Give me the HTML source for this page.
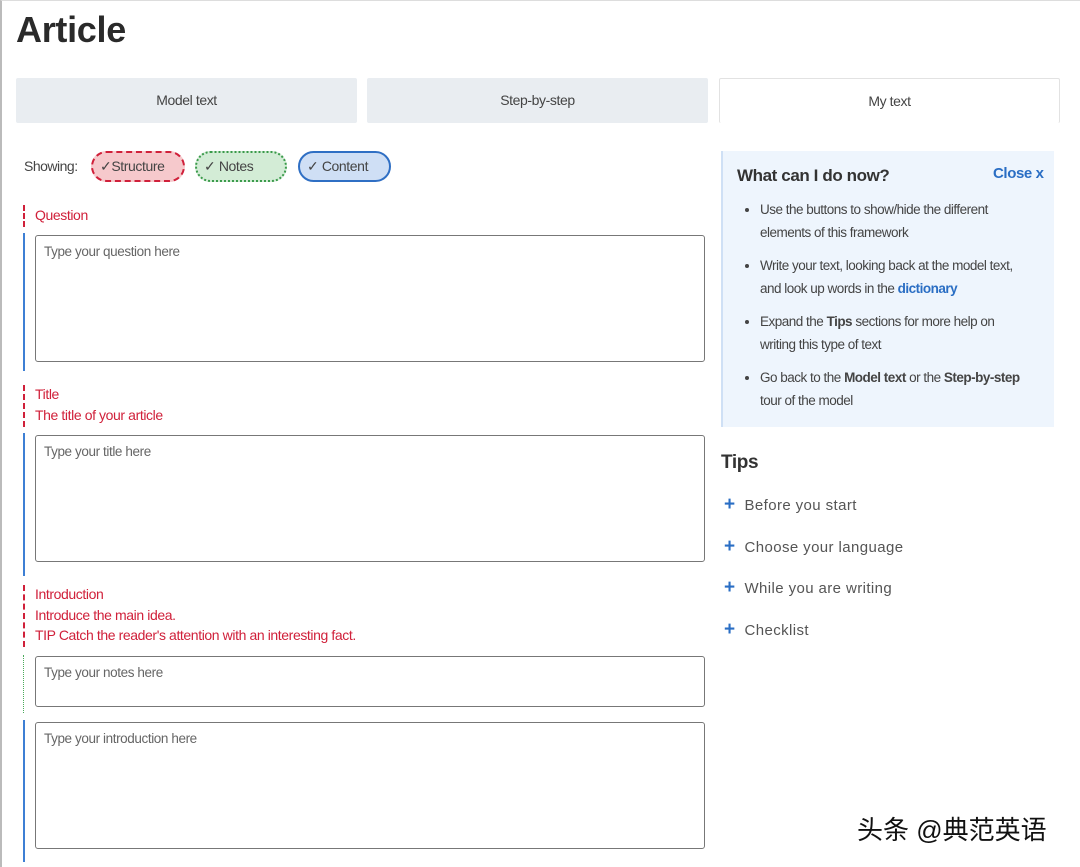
<!DOCTYPE html>
<html><head><meta charset="utf-8"><style>
*{margin:0;padding:0;box-sizing:border-box}
body{width:1080px;height:867px;background:#fff;font-family:"Liberation Sans",sans-serif;position:relative;overflow:hidden;color:#333}
.a{position:absolute}
.frame{left:0;top:0;width:1080px;height:867px;border-left:2px solid #bbb;border-top:1px solid #ddd}
h1{position:absolute;left:16px;top:9px;font-size:36px;font-weight:bold;color:#2a2a2a;letter-spacing:-0.3px}
.tab{position:absolute;top:78px;height:45px;width:341px;background:#e9edf1;font-size:14px;color:#444;text-align:center;line-height:45px;letter-spacing:-0.4px;border-radius:2px}
.pill{position:absolute;top:151px;height:31px;border-radius:16px;font-size:14px;line-height:27px;color:#444;letter-spacing:-0.4px;padding-left:7px}
.lbl{position:absolute;left:35px;font-size:14px;color:#d0203a;letter-spacing:-0.4px;line-height:21px}
.box{position:absolute;left:35px;width:670px;border:1.5px solid #777;border-radius:3px;font-size:13.5px;color:#666;padding:8px 8px;letter-spacing:-0.4px}
.rd{position:absolute;left:23px;width:0;border-left:2px dashed #d0203a}
.bl{position:absolute;left:23px;width:2px;background:#3d7fd4}
.gd{position:absolute;left:23px;width:0;border-left:1.5px dotted #4aaa5a}
.info{left:721px;top:151px;width:333px;height:276px;background:#eef5fd;border-left:2px solid #cfe0f5}
.info ul{position:absolute;left:37px;top:48px;width:262px;font-size:13.5px;line-height:22.5px;color:#444;letter-spacing:-0.5px}
.info li{margin-bottom:11px}
.tip{position:absolute;left:724px;font-size:15px;color:#555;letter-spacing:0.4px}
.tip b{color:#2a6ec4;font-size:19px;margin-right:9px;font-weight:bold}
</style></head><body>
<div class="a frame"></div>
<h1>Article</h1>
<div class="tab" style="left:16px">Model text</div>
<div class="tab" style="left:367px">Step-by-step</div>
<div class="tab" style="left:719px;background:#fff;border:1px solid #e2e2e2;border-bottom:none">My text</div>

<div class="a" style="left:24px;top:158px;font-size:14px;color:#444;letter-spacing:-0.5px">Showing:</div>
<div class="pill" style="left:91px;width:94px;background:#f6c9cc;border:2.5px dashed #d0203a">✓Structure</div>
<div class="pill" style="left:195px;width:92px;background:#d3ecd6;border:2.5px dotted #3a9a4a">✓ Notes</div>
<div class="pill" style="left:298px;width:93px;background:#cfdff5;border:2.5px solid #2f6fc4">✓ Content</div>

<div class="rd" style="top:205px;height:22px"></div>
<div class="lbl" style="top:205px">Question</div>
<div class="bl" style="top:233px;height:138px"></div>
<div class="box" style="top:235px;height:127px">Type your question here</div>

<div class="rd" style="top:385px;height:42px"></div>
<div class="lbl" style="top:384px">Title<br>The title of your article</div>
<div class="bl" style="top:433px;height:143px"></div>
<div class="box" style="top:435px;height:127px">Type your title here</div>

<div class="rd" style="top:585px;height:62px"></div>
<div class="lbl" style="top:584px;line-height:20.5px">Introduction<br>Introduce the main idea.<br>TIP Catch the reader's attention with an interesting fact.</div>
<div class="gd" style="top:655px;height:58px"></div>
<div class="box" style="top:656px;height:51px">Type your notes here</div>
<div class="bl" style="top:720px;height:142px"></div>
<div class="box" style="top:722px;height:127px">Type your introduction here</div>

<div class="a info">
<div class="a" style="left:14px;top:15px;font-size:17px;font-weight:bold;color:#333;letter-spacing:-0.4px">What can I do now?</div>
<div class="a" style="left:270px;top:14px;font-size:15px;font-weight:bold;color:#2a6ec4;letter-spacing:-0.4px">Close x</div>
<ul>
<li>Use the buttons to show/hide the different elements of this framework</li>
<li>Write your text, looking back at the model text, and look up words in the <b style="color:#2a6ec4">dictionary</b></li>
<li>Expand the <b>Tips</b> sections for more help on writing this type of text</li>
<li>Go back to the <b>Model text</b> or the <b>Step-by-step</b> tour of the model</li>
</ul>
</div>

<div class="a" style="left:721px;top:452px;font-size:19px;font-weight:bold;color:#333;letter-spacing:-0.4px">Tips</div>
<div class="tip" style="top:494px"><b>+</b>Before you start</div>
<div class="tip" style="top:536px"><b>+</b>Choose your language</div>
<div class="tip" style="top:577px"><b>+</b>While you are writing</div>
<div class="tip" style="top:619px"><b>+</b>Checklist</div>

<div class="a" style="left:857px;top:810px;font-size:26px;color:#111;font-family:'Liberation Sans','Noto Sans CJK SC',sans-serif;text-shadow:1px 1px 1px #fff">头条 @典范英语</div>
</body></html>
